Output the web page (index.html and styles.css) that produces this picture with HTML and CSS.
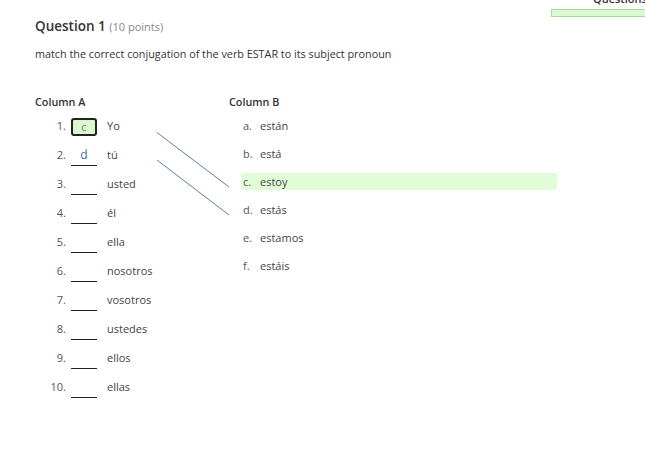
FILE: index.html
```html
<!DOCTYPE html>
<html>
<head>
<meta charset="utf-8">
<link rel="stylesheet" href="styles.css">
</head>
<body>
<div class="progress-panel">
  <div class="progress-label">Questions</div>
  <div class="progress-bar"></div>
</div>
<div class="question">
  <h2 class="q-title">Question 1 <span class="q-points">(10 points)</span></h2>
  <p class="q-text">match the correct conjugation of the verb ESTAR to its subject pronoun</p>
  <div class="columns">
    <div class="col-a">
      <div class="col-head">Column A</div>
      <div class="a-row"><span class="num">1.</span><span class="blank boxed">c</span><span class="word">Yo</span></div>
      <div class="a-row"><span class="num">2.</span><span class="blank filled">d</span><span class="word">tú</span></div>
      <div class="a-row"><span class="num">3.</span><span class="blank"></span><span class="word">usted</span></div>
      <div class="a-row"><span class="num">4.</span><span class="blank"></span><span class="word">él</span></div>
      <div class="a-row"><span class="num">5.</span><span class="blank"></span><span class="word">ella</span></div>
      <div class="a-row"><span class="num">6.</span><span class="blank"></span><span class="word">nosotros</span></div>
      <div class="a-row"><span class="num">7.</span><span class="blank"></span><span class="word">vosotros</span></div>
      <div class="a-row"><span class="num">8.</span><span class="blank"></span><span class="word">ustedes</span></div>
      <div class="a-row"><span class="num">9.</span><span class="blank"></span><span class="word">ellos</span></div>
      <div class="a-row"><span class="num">10.</span><span class="blank"></span><span class="word">ellas</span></div>
    </div>
    <div class="col-b">
      <div class="col-head col-head-b">Column B</div>
      <div class="b-row"><span class="letter">a.</span><span class="word">están</span></div>
      <div class="b-row"><span class="letter">b.</span><span class="word">está</span></div>
      <div class="b-row active"><span class="letter">c.</span><span class="word">estoy</span></div>
      <div class="b-row"><span class="letter">d.</span><span class="word">estás</span></div>
      <div class="b-row"><span class="letter">e.</span><span class="word">estamos</span></div>
      <div class="b-row"><span class="letter">f.</span><span class="word">estáis</span></div>
    </div>
  </div>
</div>
<svg class="links" width="645" height="455" viewBox="0 0 645 455">
  <line x1="157" y1="132.5" x2="229" y2="187" />
  <line x1="157" y1="160" x2="229" y2="215" />
</svg>
</body>
</html>
```
FILE: styles.css
```css
html, body {
  margin: 0;
  padding: 0;
  background: #ffffff;
}
body {
  font-family: "Open Sans", "DejaVu Sans", sans-serif;
  color: #333333;
  width: 645px;
  height: 455px;
  overflow: hidden;
  position: relative;
}
.progress-panel {
  position: absolute;
  top: -8px;
  left: 551px;
  width: 100px;
}
.progress-label {
  font-size: 11px;
  font-weight: 600;
  color: #333;
  padding-left: 42px;
  line-height: 14px;
  height: 17px;
  white-space: nowrap;
}
.progress-bar {
  height: 6px;
  background: #dcf8d2;
  border: 1px solid #a6dc94;
}
.question {
  padding: 17px 0 0 35px;
}
.q-title {
  margin: 0;
  font-size: 13.5px;
  font-weight: 600;
  line-height: 18px;
  color: #333;
}
.q-points {
  font-size: 11px;
  font-weight: 400;
  color: #888;
}
.q-text {
  margin: 10px 0 0 0;
  font-size: 10.8px;
  line-height: 16px;
  color: #333;
}
.columns {
  display: flex;
  margin-top: 32px;
}
.col-a {
  width: 194px;
}
.col-head {
  font-size: 10.8px;
  font-weight: 600;
  line-height: 16px;
  height: 16px;
  margin-bottom: 8px;
  color: #333;
}
.col-head-b {
  margin-bottom: 7px;
}
.a-row {
  display: flex;
  align-items: flex-start;
  height: 29px;
  font-size: 11px;
  line-height: 16px;
}
.a-row .num {
  width: 31px;
  text-align: right;
  color: #555;
}
.blank {
  width: 26px;
  height: 19px;
  margin-left: 5px;
  box-sizing: border-box;
  border-bottom: 1px solid #222;
  text-align: center;
  font-size: 12px;
  line-height: 16px;
}
.blank.filled {
  color: #3a6db5;
}
.blank.boxed {
  height: 18px;
  border: 2px solid #222;
  border-radius: 3px;
  background: #dcf7cf;
  color: #5f8f60;
  font-size: 11px;
  line-height: 14px;
}
.a-row .word {
  margin-left: 10px;
  color: #444;
}
.col-b {
  width: 330px;
}
.b-row {
  display: flex;
  align-items: center;
  height: 17px;
  margin: 0 0 11px 12px;
  width: 316px;
  font-size: 11px;
  padding-left: 2px;
  box-sizing: border-box;
}
.b-row.active {
  background: #e2fcd8;
}
.b-row .letter {
  width: 17px;
  color: #555;
}
.b-row .word {
  color: #444;
}
.links {
  position: absolute;
  top: 0;
  left: 0;
  pointer-events: none;
}
.links line {
  stroke: #5a7fa6;
  stroke-width: 1;
}
```
